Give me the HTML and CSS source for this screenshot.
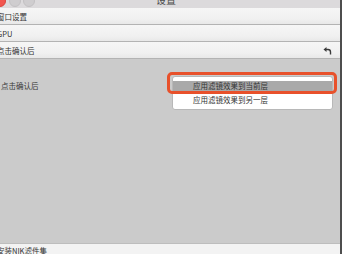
FILE: index.html
```html
<!DOCTYPE html>
<html>
<head>
<meta charset="utf-8">
<link rel="stylesheet" href="styles.css">
</head>
<body>
<div class="window">
  <div class="titlebar">
    <div class="lights">
      <span class="light red"></span>
      <span class="light gray g1"></span>
      <span class="light gray g2"></span>
    </div>
    <div class="title">设置</div>
  </div>
  <div class="row"><span class="label">窗口设置</span></div>
  <div class="row"><span class="label">GPU</span></div>
  <div class="row"><span class="label">点击确认后</span>
    <svg class="undo" width="9" height="8" viewBox="0 0 9 8">
      <path d="M0.5 2.5 L3.5 0 L3.5 5 Z" fill="#3a3a3a"/>
      <path d="M3 2.5 H5 Q7.5 2.5 7.5 5 V7.5" fill="none" stroke="#3a3a3a" stroke-width="1.4"/>
    </svg>
  </div>
  <div class="panel">
    <div class="plabel">点击确认后</div>
    <div class="dropdown">
      <div class="menu">
        <div class="item selected">应用滤镜效果到当前层</div>
        <div class="item">应用滤镜效果到另一层</div>
      </div>
      <div class="highlight"></div>
    </div>
  </div>
  <div class="bottom"><span class="label">安装NIK滤件集</span></div>
</div>
</body>
</html>
```
FILE: styles.css
```css
html, body {
  margin: 0;
  padding: 0;
  background: #cbcbcb;
  overflow: hidden;
}
body {
  font-family: "Noto Sans CJK SC", "Noto Sans", sans-serif;
  color: #333;
}
.window {
  width: 342px;
  height: 254px;
  box-sizing: border-box;
  border-right: 2px solid #4e4e4e;
  display: flex;
  flex-direction: column;
  overflow: hidden;
}
.titlebar {
  height: 8px;
  flex: none;
  background: #dcdadc;
  display: grid;
  overflow: hidden;
}
.lights, .title {
  grid-area: 1 / 1;
}
.lights {
  display: flex;
  margin-top: -5px;
  margin-left: -6px;
}
.light {
  width: 12px;
  height: 12px;
  border-radius: 50%;
  box-sizing: border-box;
  flex: none;
}
.red {
  background: #f2564f;
  border: 1px solid #d9453f;
}
.gray {
  background: #cfcdcf;
  border: 1px solid #c3c1c3;
}
.g1 { margin-left: 3px; }
.g2 { margin-left: 2px; }
.title {
  text-align: center;
  font-size: 10px;
  line-height: 12px;
  margin-top: -6px;
  padding-right: 8px;
  color: #4a4a4a;
}
.row {
  height: 16px;
  flex: none;
  border-bottom: 1px solid #b3b3b3;
  background: linear-gradient(#f6f6f6, #f0f0f0 70%, #e8e8e8);
  display: flex;
  align-items: center;
  justify-content: space-between;
  font-size: 7.5px;
  line-height: 10px;
}
.label {
  margin-left: -3px;
  padding-top: 1px;
}
.undo {
  margin-right: 8px;
  margin-top: 2px;
}
.panel {
  flex: none;
  height: 184px;
  background: #cbcbcb;
  display: flex;
  justify-content: space-between;
  align-items: flex-start;
  padding-top: 13px;
  box-sizing: border-box;
  font-size: 7.5px;
  line-height: 10px;
}
.plabel {
  margin-top: 9px;
  padding-left: 1px;
  color: #3a3a3a;
}
.dropdown {
  position: relative;
  width: 161px;
  margin-top: 4px;
  margin-right: 7px;
}
.menu {
  background: #fff;
  border: 1px solid #b8b8b8;
  border-radius: 3px;
  padding: 4px 0;
}
.item {
  height: 10px;
  padding-left: 20px;
  color: #333;
}
.item + .item {
  margin-top: 4px;
}
.selected {
  background: #a9a9a9;
}
.highlight {
  position: absolute;
  top: -4px;
  left: -5px;
  right: -4px;
  height: 22px;
  box-sizing: border-box;
  border: 3px solid #e8512b;
  border-radius: 5px;
}
.bottom {
  flex: 1;
  border-top: 1px solid #bdbdbd;
  background: #f3f3f3;
  font-size: 7.5px;
  line-height: 10px;
  padding-top: 2px;
}
```
